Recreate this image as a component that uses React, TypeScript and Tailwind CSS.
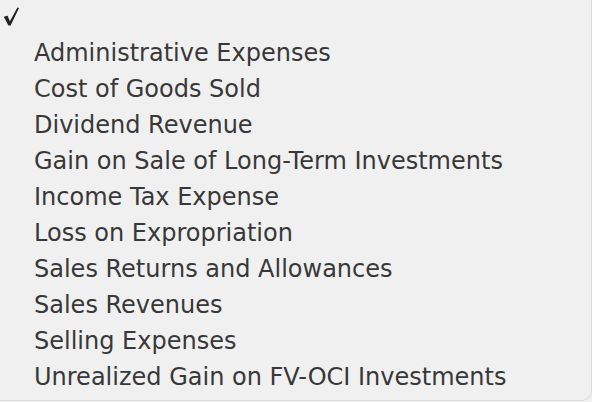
const items = [
  "Administrative Expenses",
  "Cost of Goods Sold",
  "Dividend Revenue",
  "Gain on Sale of Long-Term Investments",
  "Income Tax Expense",
  "Loss on Expropriation",
  "Sales Returns and Allowances",
  "Sales Revenues",
  "Selling Expenses",
  "Unrealized Gain on FV-OCI Investments",
];

export default function App() {
  return (
    <div className="w-[592px] h-[402px] overflow-hidden bg-[#f0f0f0]">
      <ul
        className="h-full -mt-[1px] rounded-br-[10px] border-r border-b border-[#dcdcdc] text-[24px] text-[#383838] leading-[36px]"
        style={{ fontFamily: '"DejaVu Sans", Verdana, sans-serif' }}
      >
        <li className="h-[36px] pl-[2px] pt-[7px]">
          {/* checkmark of the selected (empty) option */}
          <svg width="20" height="22" viewBox="0 0 20 22">
            <path d="M1.8 10.8 L5.6 9.8 L7.9 15.2 L15.4 1.4 L17 2 L8.6 19.6 L6.4 19.6 Z" fill="#222" />
          </svg>
        </li>
        {items.map((item) => (
          <li key={item} className="h-[36px] pl-[34px] whitespace-nowrap">
            {item}
          </li>
        ))}
      </ul>
    </div>
  );
}
